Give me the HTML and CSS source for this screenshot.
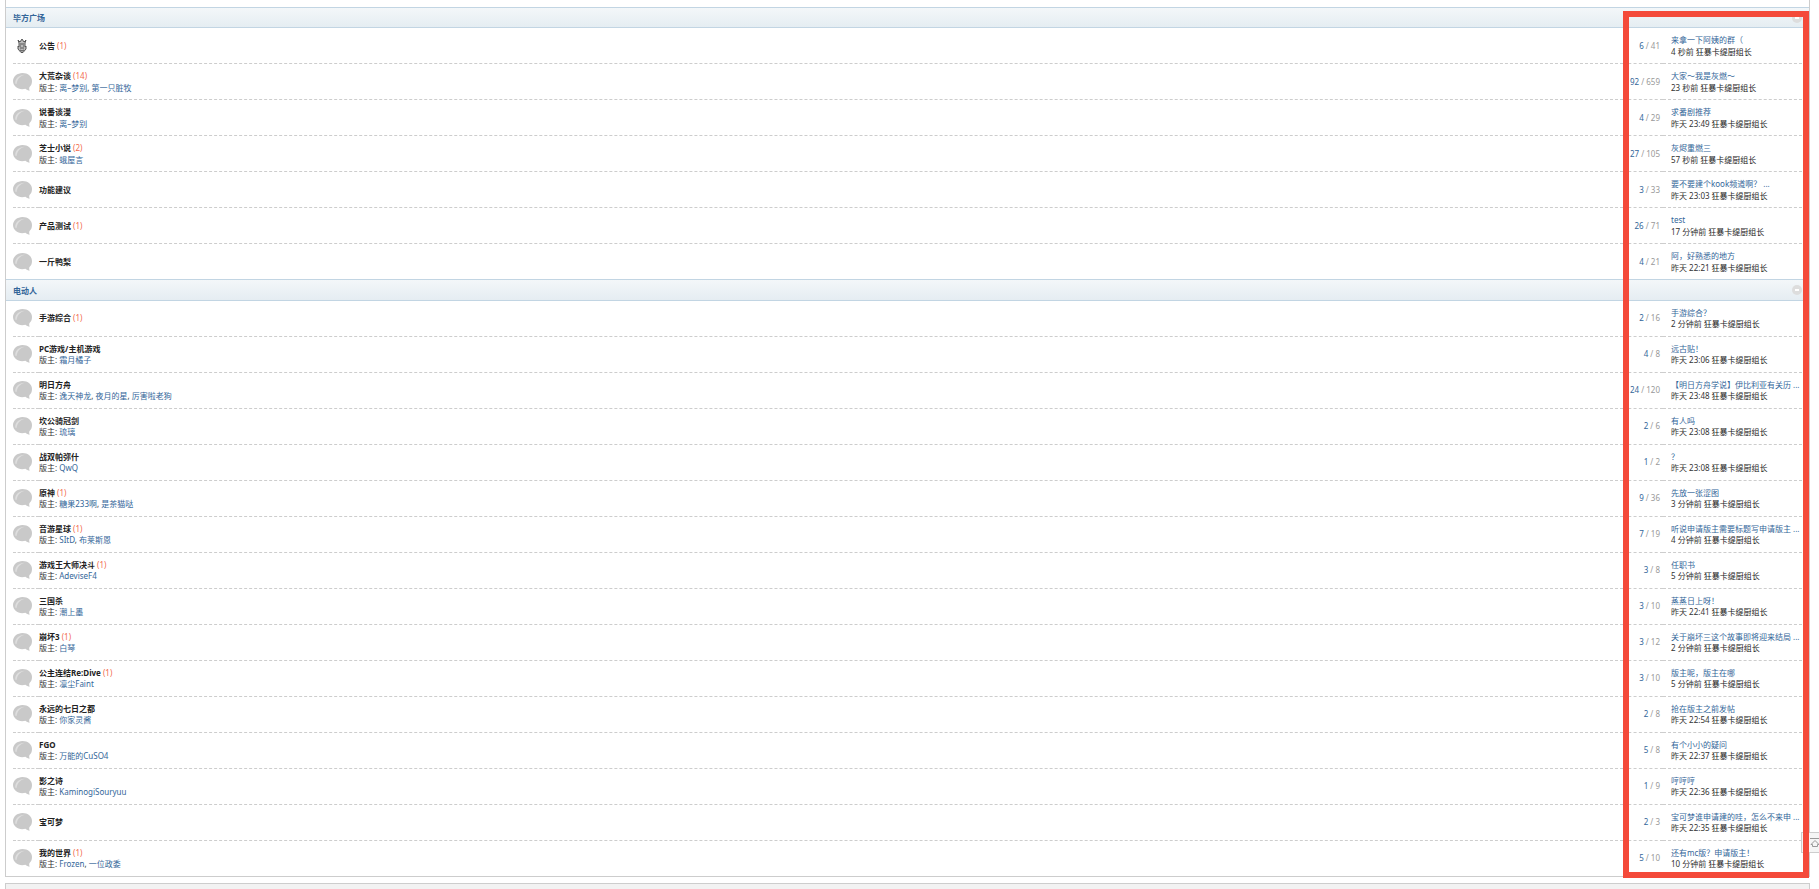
FILE: index.html
```
<!DOCTYPE html>
<html lang="zh-CN">
<head>
  <meta charset="UTF-8">
  <title>论坛</title>
  <meta name="viewport" content="width=device-width, initial-scale=1.0">
  <link rel="stylesheet" href="styles.css">
</head>
<body>

  <svg class="defs" width="0" height="0" aria-hidden="true">
    <defs>
      <symbol id="bubble" viewBox="0 0 20 18">
        <path d="M9.500 0C4.300 0 0 3.600 0 8s4 8.200 9.200 8.200c1.300 0 2.300-.2 3.300-.5 1 .9 2.500 1.800 4.300 1.900-.7-1-.8-2.200-.3-3.500C18.300 12.600 19 10.400 19 8c0-4.500-4-8-9.500-8z" fill="#c9c9c9"/>
        <path d="M2.200 10.500C2 5.500 6 1.800 12 1.700 7 3 4.200 6 3.600 11z" fill="#dedede"/>
      </symbol>
      <symbol id="notice" viewBox="0 0 10 14">
        <path d="M2 4L1 1l2 2 2-3 2 3 2-2-1 3v4l1-1v3L6 13.500H4L1 10V7l1 1z" fill="#bbb" stroke="#555"/>
        <path d="M3 5h4M3 7h1M6 7h1M3 9h4M3 11l2 1 2-1" fill="none" stroke="#555"/>
      </symbol>
    </defs>
  </svg>

  <main id="forums"></main>
  <div class="next-box"></div>

  <a href="#" class="to-top" aria-label="返回顶部">
    <svg viewBox="0 0 10 10"><path d="M0 .5h10M5 2.500L9 6.500H7.500v2h-5v-2H1z" fill="none" stroke="#999"/></svg>
  </a>
  <div class="mark"></div>

  <script src="forums.js"></script>
</body>
</html>
```
FILE: styles.css
```
* {
  box-sizing: border-box;
}

body {
  margin: 0;
  padding: 0 9px 0 5px;
  background: #fff;
  color: #333;
  font: 8px/12px "Noto Sans", "Noto Sans CJK SC", sans-serif;
  overflow: hidden;
}

a {
  color: #369;
  text-decoration: none;
}

a:hover {
  text-decoration: underline;
}

.defs {
  position: absolute;
}

#forums {
  padding-top: 7px;
  border: 1px solid #cdcdcd;
  border-top: 0;
}

.cat-head {
  display: flex;
  align-items: center;
  justify-content: space-between;
  height: 21px;
  padding: 0 7px;
  border: solid #c2d5e3;
  border-width: 1px 0;
  background: linear-gradient(#f3f7f9, #e5edf2);
}

.cat + .cat {
  line-height: 11px;
}

.cat + .cat .cat-head {
  height: 22px;
}

.cat-head h2 {
  margin: 0;
  font-size: 8px;
}

.fold {
  position: relative;
  width: 10px;
  height: 10px;
  padding: 0;
  border: 0;
  border-radius: 50%;
  background: #ddd;
}

.fold::after {
  content: "";
  position: absolute;
  left: 3px;
  top: 4px;
  width: 4px;
  height: 2px;
  background: #fff;
}

table {
  width: calc(100% - 14px);
  margin: 0 7px;
  border-spacing: 0;
  table-layout: fixed;
}

td {
  height: 36px;
  padding: 0;
  border-top: 1px dashed #cdcdcd;
  vertical-align: middle;
}

tr:first-child td {
  height: 35px;
  border-top: 0;
}

.cat + .cat td {
  padding-bottom: 2px;
}

.col-icon {
  width: 26px;
}

.col-num {
  width: 40px;
}

.col-last {
  width: 139px;
}

.icon svg {
  display: block;
  width: 20px;
  height: 18px;
}

.icon .notice {
  width: 10px;
  height: 14px;
  margin-left: 4px;
}

.name h3 {
  display: inline;
  margin: 0;
  font-size: 8px;
}

.name h3 a {
  color: #222;
}

.name p,
.last p {
  margin: 0;
}

.today {
  color: #f26c4f;
}

.num {
  padding-right: 3px;
  color: #999;
  text-align: right;
  white-space: nowrap;
}

.num b {
  color: #369;
  font-weight: 400;
}

.last {
  padding-left: 8px;
  white-space: nowrap;
}

.last .who {
  color: #222;
}

.next-box {
  height: 20px;
  margin-top: 6px;
  border: 1px solid #cdcdcd;
  background: #f2f2f2;
}

/* red frame over the last two columns */
.mark {
  position: absolute;
  top: 11px;
  right: 10px;
  width: 186px;
  height: 867px;
  border: 6px solid #f44a3a;
  pointer-events: none;
}

.to-top {
  position: absolute;
  top: 832px;
  right: 0;
  width: 18px;
  height: 21px;
  padding: 5px 0 0 8px;
  border: 1px solid #cdcdcd;
  border-right: 0;
  background: #f5f5f5;
}

.to-top svg {
  display: block;
  width: 10px;
  height: 10px;
}
```
FILE: forums.js
```
// name, today, moderators, topics, posts, last title, last time
const cats = [
  ["毕方广场", [
    ["公告", 1, "", 6, 41, "来拿一下阿姨的群（", "4 秒前"],
    ["大荒杂谈", 14, "离–梦别, 第一只脏牧", 92, 659, "大家～我是灰燃～", "23 秒前"],
    ["说番谈漫", 0, "离–梦别", 4, 29, "求番剧推荐", "昨天 23:49"],
    ["芝士小说", 2, "蛾屋言", 27, 105, "灰烬重燃三", "57 秒前"],
    ["功能建议", 0, "", 3, 33, "要不要建个kook频道啊？ ...", "昨天 23:03"],
    ["产品测试", 1, "", 26, 71, "test", "17 分钟前"],
    ["一斤鸭梨", 0, "", 4, 21, "阿，好熟悉的地方", "昨天 22:21"]
  ]],
  ["电动人", [
    ["手游综合", 1, "", 2, 16, "手游综合？", "2 分钟前"],
    ["PC游戏/主机游戏", 0, "霜月橘子", 4, 8, "远古贴！", "昨天 23:06"],
    ["明日方舟", 0, "逸天神龙, 夜月的星, 厉害啦老狗", 24, 120, "【明日方舟学说】伊比利亚有关历 ...", "昨天 23:48"],
    ["坎公骑冠剑", 0, "琉璃", 2, 6, "有人吗", "昨天 23:08"],
    ["战双帕弥什", 0, "QwQ", 1, 2, "？", "昨天 23:08"],
    ["原神", 1, "糖果233啊, 是茶猫哒", 9, 36, "先放一张涩图", "3 分钟前"],
    ["音游星球", 1, "SItD, 布莱斯恩", 7, 19, "听说申请版主需要标题写申请版主 ...", "4 分钟前"],
    ["游戏王大师决斗", 1, "AdeviseF4", 3, 8, "任职书", "5 分钟前"],
    ["三国杀", 0, "潮上墨", 3, 10, "蒸蒸日上呀！", "昨天 22:41"],
    ["崩坏3", 1, "白琴", 3, 12, "关于崩坏三这个故事即将迎来结局 ...", "2 分钟前"],
    ["公主连结Re:Dive", 1, "凛尘Faint", 3, 10, "版主呢，版主在哪", "5 分钟前"],
    ["永远的七日之都", 0, "你家灵酱", 2, 8, "抢在版主之前发帖", "昨天 22:54"],
    ["FGO", 0, "万能的CuSO4", 5, 8, "有个小小的疑问", "昨天 22:37"],
    ["影之诗", 0, "KaminogiSouryuu", 1, 9, "哼哼哼", "昨天 22:36"],
    ["宝可梦", 0, "", 2, 3, "宝可梦谁申请建的哇，怎么不来申 ...", "昨天 22:35"],
    ["我的世界", 1, "Frozen, 一位政委", 5, 10, "还有mc版？申请版主！", "10 分钟前"]
  ]]
];

function row(f) {
  const [name, today, mods, topics, posts, title, time] = f;
  const icon = name === "公告"
    ? '<svg class="notice"><use href="#notice"/></svg>'
    : '<svg><use href="#bubble"/></svg>';
  const links = mods.split(", ").map(m => `<a href="#">${m}</a>`).join(", ");
  return `
    <tr>
      <td class="icon">${icon}</td>
      <td class="name">
        <h3><a href="#">${name}</a></h3>
        ${today ? `<span class="today">(${today})</span>` : ""}
        ${mods ? `<p>版主: ${links}</p>` : ""}
      </td>
      <td class="num"><b>${topics}</b> / ${posts}</td>
      <td class="last">
        <p><a href="#">${title}</a></p>
        <p>${time} <a href="#" class="who">狂暴卡缇厨组长</a></p>
      </td>
    </tr>`;
}

document.getElementById("forums").innerHTML = cats.map(([title, list]) => `
  <section class="cat">
    <div class="cat-head">
      <h2><a href="#">${title}</a></h2>
      <button class="fold" aria-label="收起/展开"></button>
    </div>
    <table>
      <colgroup><col class="col-icon"><col><col class="col-num"><col class="col-last"></colgroup>
      <tbody>${list.map(row).join("")}</tbody>
    </table>
  </section>`).join("");
```
